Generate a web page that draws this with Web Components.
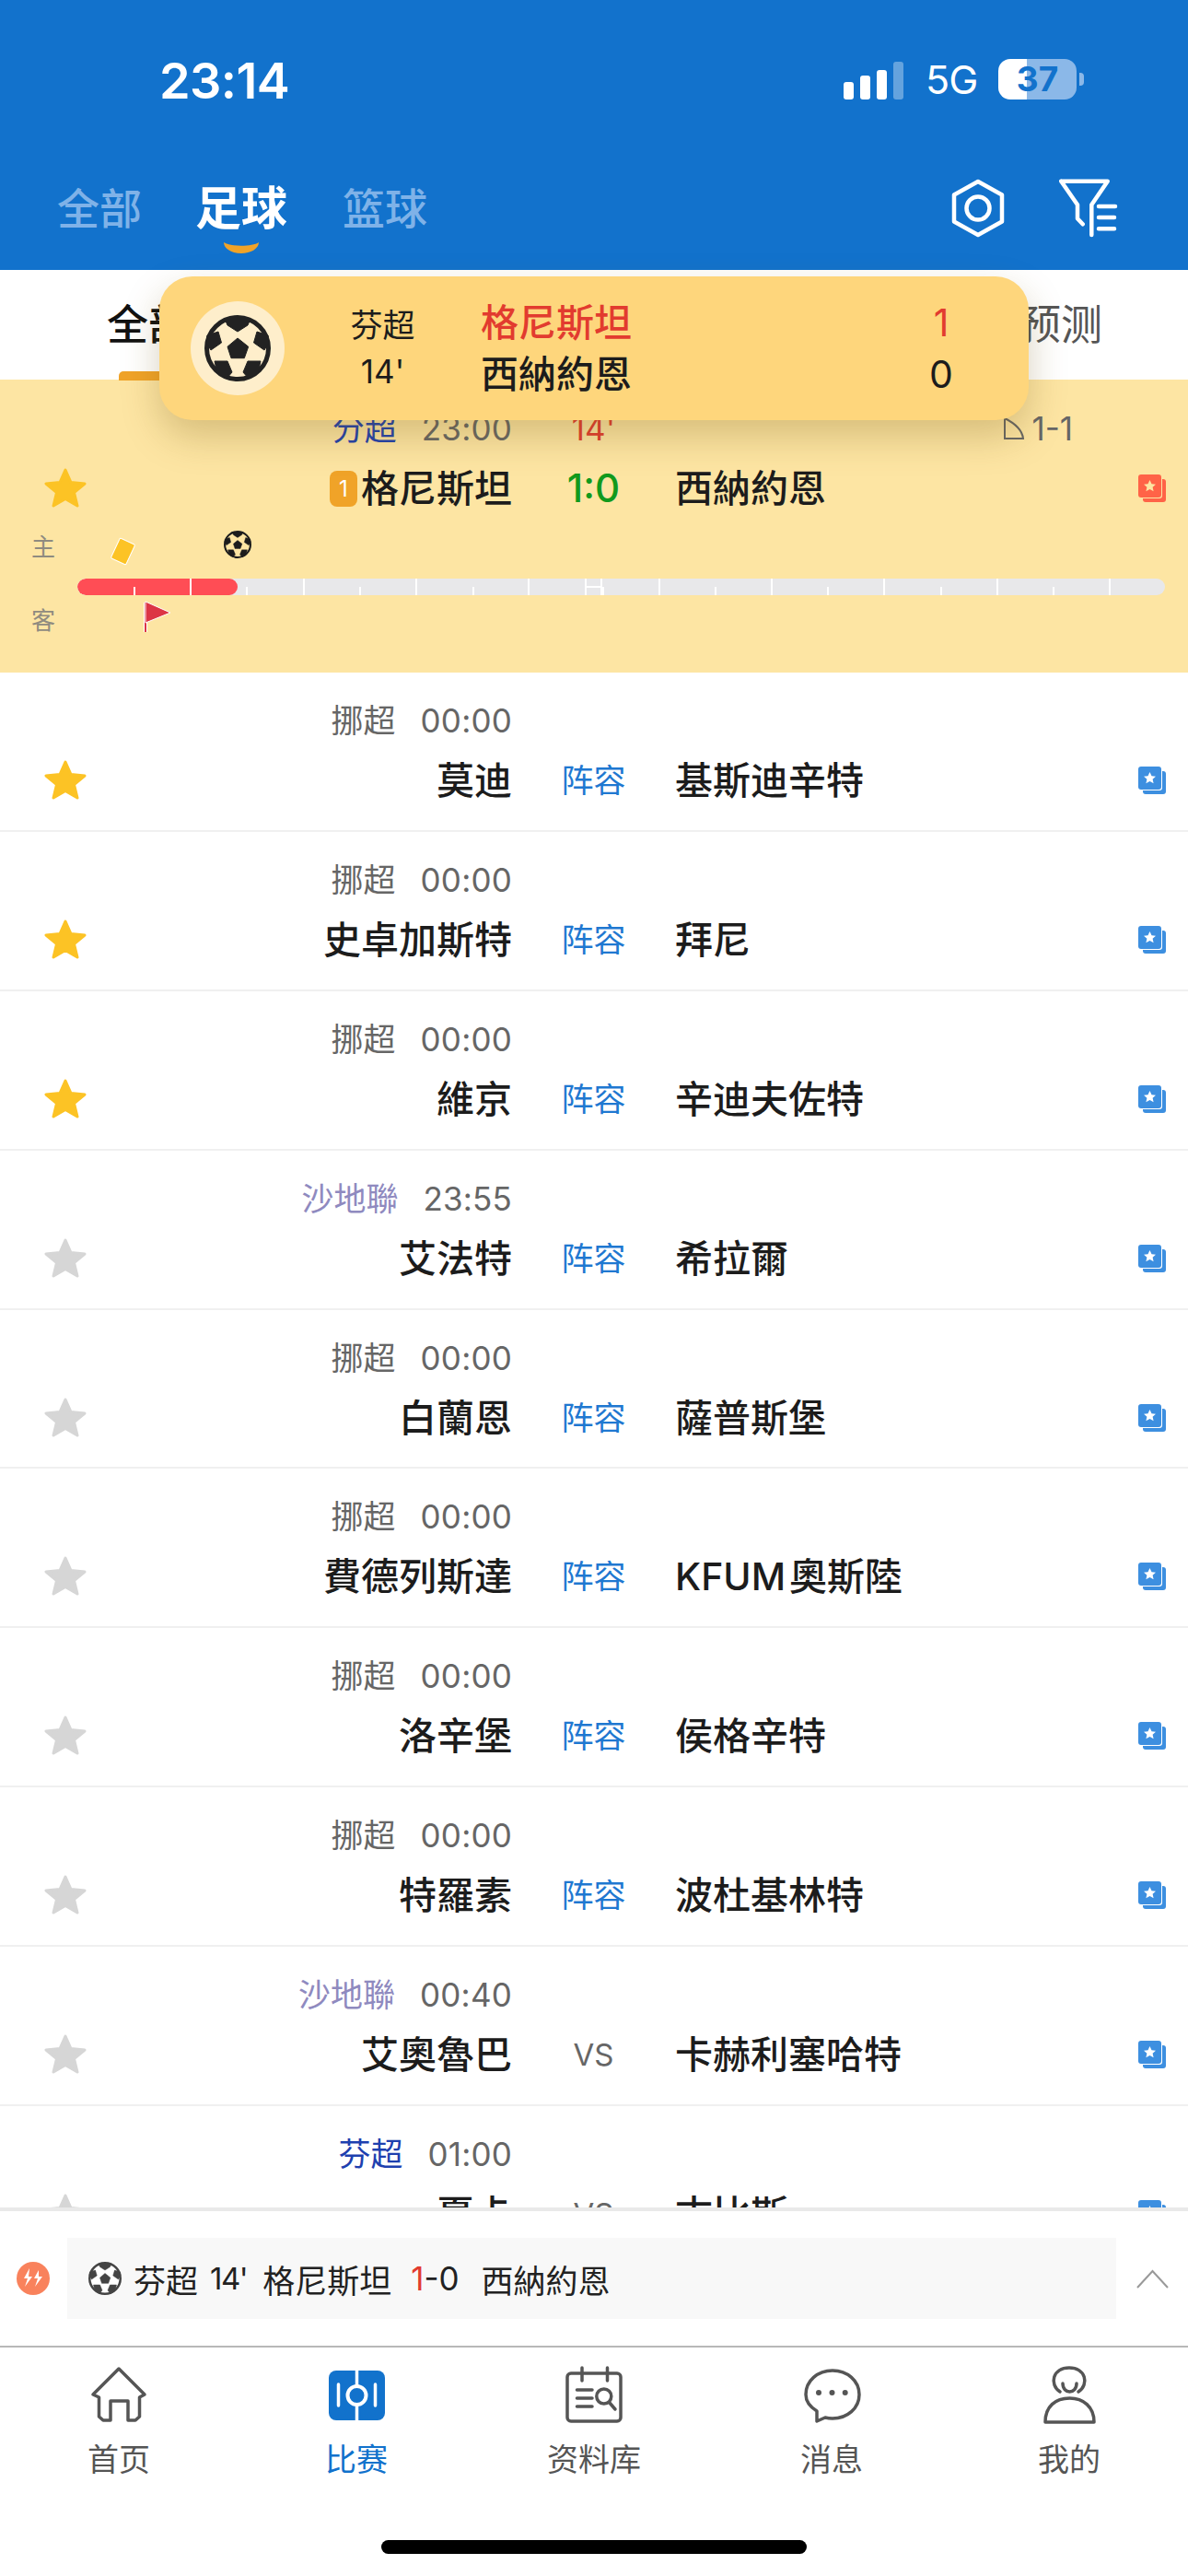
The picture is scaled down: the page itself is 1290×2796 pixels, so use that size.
<!DOCTYPE html>
<html lang="zh">
<head>
<meta charset="utf-8">
<title>比赛</title>
<style>
  html, body { margin: 0; padding: 0; background: #fff; }
  body { font-family: Inter, "Noto Sans CJK SC", sans-serif; width: 1290px; height: 2796px; overflow: hidden; }
</style>
</head>
<body>
<app-screen>
  <app-header></app-header>
  <sub-tabs></sub-tabs>
  <match-list>
    <match-row live starred league="分超" league-color="#1e40af" time="23:00" minute="14'" corner="1-1" badge="1" home="格尼斯坦" mid="1:0" away="西納約恩">
      <match-timeline></match-timeline>
    </match-row>
    <match-row starred league="挪超" time="00:00" home="莫迪" mid="阵容" away="基斯迪辛特"></match-row>
    <match-row starred league="挪超" time="00:00" home="史卓加斯特" mid="阵容" away="拜尼"></match-row>
    <match-row starred league="挪超" time="00:00" home="維京" mid="阵容" away="辛迪夫佐特"></match-row>
    <match-row league="沙地聯" league-color="#8f8abf" time="23:55" home="艾法特" mid="阵容" away="希拉爾"></match-row>
    <match-row league="挪超" time="00:00" home="白蘭恩" mid="阵容" away="薩普斯堡"></match-row>
    <match-row league="挪超" time="00:00" home="費德列斯達" mid="阵容" away="KFUM 奧斯陸"></match-row>
    <match-row league="挪超" time="00:00" home="洛辛堡" mid="阵容" away="侯格辛特"></match-row>
    <match-row league="挪超" time="00:00" home="特羅素" mid="阵容" away="波杜基林特"></match-row>
    <match-row league="沙地聯" league-color="#8f8abf" time="00:40" home="艾奧魯巴" mid="VS" away="卡赫利塞哈特"></match-row>
    <match-row league="芬超" league-color="#1e40af" time="01:00" home="夏卡" mid="VS" away="古比斯"></match-row>
  </match-list>
  <ticker-bar></ticker-bar>
  <tab-bar>
    <tab-item icon="home">首页</tab-item>
    <tab-item icon="match" active>比赛</tab-item>
    <tab-item icon="data">资料库</tab-item>
    <tab-item icon="chat">消息</tab-item>
    <tab-item icon="me">我的</tab-item>
  </tab-bar>
  <goal-toast></goal-toast>
</app-screen>

<script>
// pieza comun: el balon
class SoccerBall extends HTMLElement {
  constructor() {
    super();
    this.attachShadow({ mode: "open" });
  }
  connectedCallback() {
    const size = this.getAttribute("size") || 72;
    const dark = this.getAttribute("dark") || "#222";
    const light = this.getAttribute("light") || "#fff";
    this.shadowRoot.innerHTML = `
    <style>:host { display: block; width: ${size}px; height: ${size}px; line-height: 0; }</style>
    <svg width="${size}" height="${size}" viewBox="0 0 72 72">
      <circle cx="36" cy="36" r="33.5" fill="${light}" stroke="${dark}" stroke-width="5"/>
      <g fill="${dark}" stroke="${dark}" stroke-width="1" stroke-linejoin="round">
        <polygon points="36,25 47.7,34.3 43.3,46.7 29,46.7 25,34.3"/>
        <polygon points="22,4 50,4 47,11 36,18 25,11"/>
        <polygon points="15,18 18.5,30 7,38 2,30 3,22"/>
        <polygon points="57,18 53.5,30 65,38 70,30 69,22"/>
        <polygon points="11,50 25,50 30,62 24,69 14,63"/>
        <polygon points="61,50 47,50 42,62 48,69 58,63"/>
      </g>
    </svg>`;
  }
}
customElements.define("soccer-ball", SoccerBall);

class AppScreen extends HTMLElement {
  constructor() {
    super();
    this.attachShadow({ mode: "open" }).innerHTML = `
    <style>
      :host { display: flex; flex-direction: column; position: relative; width: 1290px; height: 2796px; overflow: hidden; background: #fff; }
    </style>
    <slot></slot>`;
  }
}
customElements.define("app-screen", AppScreen);

class AppHeader extends HTMLElement {
  constructor() {
    super();
    this.attachShadow({ mode: "open" }).innerHTML = `
    <style>
      :host { display: block; height: 293px; background: #1272cc; color: #fff; flex: none; }
      .status { display: flex; justify-content: space-between; align-items: center; height: 44px; padding: 66px 113px 0 173px; }
      .time { font-size: 54px; font-weight: 600; letter-spacing: -.6px; line-height: 44px; }
      .right { display: flex; align-items: center; margin-top: -4px; }
      .bars { display: flex; align-items: flex-end; gap: 7px; height: 41px; margin-top: 2px; }
      .bars i { display: block; width: 11px; background: #fff; border-radius: 3px; }
      .net { font-size: 43px; line-height: 44px; margin-left: 24px; width: 79px; letter-spacing: -1px; }
      .batt { position: relative; width: 85px; height: 44px; border-radius: 13px; overflow: hidden;
        background: linear-gradient(90deg, #fff 0 31px, #8bb8e8 31px); color: #1272cc;
        font-size: 37px; font-weight: 700; line-height: 44px; text-align: center; }
      .nub { width: 5px; height: 14px; margin-left: 3px; background: #8bb8e8; border-radius: 0 4px 4px 0; }
      .nav { display: flex; align-items: center; margin-top: 83px; padding: 0 74px 0 62px; height: 66px; }
      .t { font-size: 46px; line-height: 66px; color: #7fb2e8; font-weight: 500; margin-right: 60px; position: relative; }
      .t:first-child { margin-right: 58px; }
      .t.on { font-size: 50px; color: #fff; font-weight: 700; }
      .smile { position: absolute; left: 30px; top: 69px; }
      .sp { flex: 1; }
      svg { display: block; fill: none; stroke: #fff; stroke-linecap: round; stroke-linejoin: round; }
      svg.smile { stroke: none; fill: #f0a328; }
    </style>
    <div class="status">
      <div class="time">23:14</div>
      <div class="right">
        <div class="bars">
          <i style="height:19px"></i><i style="height:26px"></i><i style="height:32px"></i><i style="height:41px;opacity:.35"></i>
        </div>
        <div class="net">5G</div>
        <div class="batt">37</div>
        <div class="nub"></div>
      </div>
    </div>
    <div class="nav">
      <div class="t">全部</div>
      <div class="t on">足球
        <svg class="smile" width="40" height="13" viewBox="0 0 40 13"><path d="M1 1C8 6 32 6 39 1 39 8 30 13 20 13 10 13 1 8 1 1Z"/></svg>
      </div>
      <div class="t">篮球</div>
      <div class="sp"></div>
      <svg width="64" height="64" viewBox="0 0 64 64" stroke-width="4.5" style="margin-right:56px">
        <path d="M32 3 58 17.5V46.5L32 61 6 46.5V17.5Z"/>
        <circle cx="32" cy="32" r="12.5"/>
      </svg>
      <svg width="66" height="66" viewBox="0 0 66 66" stroke-width="4.5">
        <path d="M2.3 3.7H52.7L35.3 29.3V62M2.3 3.7 20 29.3V44.3L25.7 50.3"/>
        <path d="M43 31H61M43 43H60M43 55.3H60"/>
      </svg>
    </div>`;
  }
}
customElements.define("app-header", AppHeader);

class SubTabs extends HTMLElement {
  constructor() {
    super();
    this.attachShadow({ mode: "open" }).innerHTML = `
    <style>
      :host { display: flex; justify-content: space-between; box-sizing: border-box; height: 119px; padding: 27px 93px 0 116px; flex: none; background: #fff; font-size: 45px; line-height: 66px; color: #555; }
      .on { color: #111; font-weight: 500; position: relative; }
      .on::after { content: ""; position: absolute; left: 13px; right: 13px; top: 83px; height: 10px; border-radius: 5px 5px 0 0; background: #f0a328; }
    </style>
    <div class="on">全部</div>
    <div>预测</div>`;
  }
}
customElements.define("sub-tabs", SubTabs);

class MatchList extends HTMLElement {
  constructor() {
    super();
    this.attachShadow({ mode: "open" }).innerHTML = `
    <style>:host { display: block; flex: 1; min-height: 0; overflow: hidden; }</style>
    <slot></slot>`;
  }
}
customElements.define("match-list", MatchList);

class MatchRow extends HTMLElement {
  constructor() {
    super();
    this.attachShadow({ mode: "open" });
  }
  connectedCallback() {
    const live = this.hasAttribute("live");
    const get = (n) => this.getAttribute(n) || "";
    const mid = get("mid");
    const midClass = live ? "score" : mid === "VS" ? "vs" : "lineup";
    const card = live ? "#ff6347" : "#3d8fe0";
    const gap = live ? "#fde5a3" : "#fff";
    this.shadowRoot.innerHTML = `
    <style>
      :host { display: block; box-sizing: border-box; height: ${live ? "318px" : "172.9px"}; padding-top: ${live ? 31 : 30}px;
        background: ${live ? "#fde5a3" : "#fff"}; ${live ? "" : "border-bottom: 2px solid #f0f0f0;"} }
      .g { display: grid; grid-template-columns: 142px 414px 177px 1fr 30px; padding-right: 24px; align-items: center; }
      .meta { height: 44px; font-size: 35px; line-height: 44px; color: #666; }
      .lt { grid-column: 2; display: flex; justify-content: flex-end; gap: 27px; }
      .league { color: ${get("league-color") || "#666"}; }
      .tm { letter-spacing: .2px; }
      .min { grid-column: 3; text-align: center; color: #e23b2f; }
      .corner { grid-column: 4; display: flex; justify-content: flex-end; align-items: center; gap: 7px; padding-right: 71px; }
      .teams { height: 44px; margin-top: 21px; font-size: 41px; line-height: 44px; color: #1c1c1c; font-weight: 500; }
      .star { grid-column: 1; justify-self: center; display: block; }
      .home { display: flex; justify-content: flex-end; align-items: center; gap: 4px; white-space: nowrap; }
      .badge { width: 30px; height: 39px; border-radius: 8px; background: #f0a328; color: #fff; font-size: 24px; font-weight: 400; line-height: 39px; text-align: center; }
      .mid { text-align: center; font-weight: 400; }
      .lineup { font-size: 35px; color: #1f78d1; }
      .vs { font-size: 33px; color: #666; }
      .score { font-size: 42px; color: #119a1d; font-weight: 500; }
      .away { white-space: nowrap; word-spacing: -7px; }
    </style>
    <div class="g meta">
      <div class="lt"><span class="league">${get("league")}</span><span class="tm">${get("time")}</span></div>
      ${live ? `<div class="min">${get("minute")}</div>
      <div class="corner">
        <svg width="24" height="26" viewBox="0 0 24 26" fill="none" stroke="#666" stroke-width="2"><path d="M2 2V24H22C21 15 12 7 2 2Z"/></svg>
        <span>${get("corner")}</span>
      </div>` : ""}
    </div>
    <div class="g teams">
      <svg class="star" width="46" height="44" viewBox="0 0 46 44" fill="${this.hasAttribute("starred") ? "#fcc325" : "#d6d6d6"}" stroke="${this.hasAttribute("starred") ? "#fcc325" : "#d6d6d6"}" stroke-width="3" stroke-linejoin="round">
        <polygon points="23,2 29,15.5 44,17 32.5,26.5 36,41 23,33.5 10,41 13.5,26.5 2,17 17,15.5"/>
      </svg>
      <div class="home">${get("badge") ? `<span class="badge">${get("badge")}</span>` : ""}<span>${get("home")}</span></div>
      <div class="mid ${midClass}">${mid}</div>
      <div class="away">${get("away")}</div>
      <svg width="30" height="30" viewBox="0 0 30 30">
        <rect x="5" y="5" width="25" height="25" rx="3" fill="${card}"/>
        <rect x="0" y="0" width="26" height="26" rx="3" fill="${gap}"/>
        <rect x="0" y="0" width="25" height="25" rx="3" fill="${card}"/>
        <polygon points="12.5,6 14.5,10.3 19,10.8 15.6,13.8 16.6,18.3 12.5,16 8.4,18.3 9.4,13.8 6,10.8 10.5,10.3" fill="${live ? "#fde5a3" : "#fff"}"/>
      </svg>
    </div>
    <slot></slot>`;
  }
}
customElements.define("match-row", MatchRow);

class MatchTimeline extends HTMLElement {
  constructor() {
    super();
    this.attachShadow({ mode: "open" });
  }
  connectedCallback() {
    // marcas del eje cada 61px, alternando corta y larga
    let ticks = "";
    const xs = [61, 122, 183, 245, 306, 367, 429, 489, 570, 631, 692, 753, 814, 875, 937, 998, 1059, 1120];
    xs.forEach((x, i) => {
      ticks += `<i style="left:${x}px;height:${i % 2 ? 18 : 9}px"></i>`;
    });
    this.shadowRoot.innerHTML = `
    <style>
      :host { display: block; position: relative; margin-top: 25px; height: 118px; font-size: 26px; color: #8f8b80; }
      .lane { position: relative; height: 51px; padding-left: 34px; box-sizing: border-box; }
      .lane.away { height: 49px; }
      .lane span { position: absolute; left: 34px; line-height: 30px; }
      .track { position: relative; margin-left: 84px; width: 1181px; height: 18px; border-radius: 9px; background: #e8e8ea; overflow: hidden; }
      .fill { position: absolute; left: 0; top: 0; bottom: 0; width: 174px; border-radius: 9px; background: #ff4d55; }
      .track i { position: absolute; bottom: 0; width: 1.5px; background: #fff; }
      .ht { position: absolute; left: 551px; top: 0; width: 19px; height: 18px; box-sizing: border-box; border-left: 2px solid #fff; border-right: 2px solid #fff; }
      .ht::after { content: ""; position: absolute; left: 0; right: 0; top: 8px; height: 2px; background: #fff; }
      .yellow { position: absolute; left: 124px; top: 9px; width: 19px; height: 25px; border-radius: 2px; background: #fcc325; border: 1.5px solid #fff; box-sizing: border-box; transform: rotate(25deg); }
      soccer-ball { position: absolute; left: 243px; top: -1px; }
      .flag { position: absolute; left: 154px; top: 6px; }
    </style>
    <div class="lane"><span style="top:2px">主</span><div class="yellow"></div><soccer-ball size="30" dark="#1c1c1c" light="#fde5a3"></soccer-ball></div>
    <div class="track"><div class="fill"></div>${ticks}<div class="ht"></div></div>
    <div class="lane away"><span style="top:13px">客</span>
      <svg class="flag" width="34" height="36" viewBox="0 0 34 36">
        <path d="M4 2V34" stroke="#fff" stroke-width="4"/>
        <path d="M4 2V34" stroke="#dc3545" stroke-width="2"/>
        <polygon points="4,1 31,13 4,24" fill="#dc3545" stroke="#fff" stroke-width="1"/>
      </svg>
    </div>`;
  }
}
customElements.define("match-timeline", MatchTimeline);

class TickerBar extends HTMLElement {
  constructor() {
    super();
    this.attachShadow({ mode: "open" }).innerHTML = `
    <style>
      :host { display: flex; align-items: center; box-sizing: border-box; height: 152px; flex: none; background: #fff;
        border-top: 4px solid #e9e9e9; border-bottom: 2px solid #b8b8b8; padding: 0 22px 0 18px; position: relative; }
      .bolt { display: block; flex: none; }
      .box { flex: none; display: flex; align-items: center; box-sizing: border-box; width: 1139px; height: 88px; margin-left: 19px; padding-left: 23px; background: #f8f8f8; font-size: 35px; color: #222; white-space: nowrap; }
      .box soccer-ball { margin-right: 13px; }
      .mn { margin-left: 13px; font-size: 33px; letter-spacing: -1.5px; }
      .red { color: #e23b2f; }
      .chev { display: block; margin-left: 22px; flex: none; }
    </style>
    <svg class="bolt" width="36" height="36" viewBox="0 0 36 36">
      <circle cx="18" cy="18" r="18" fill="#f9825c"/>
      <path d="M14 7 8 18h4l-3 9 8-11h-4zM24 9l-5 9h4l-3 9 8-11h-4z" fill="#fff"/>
    </svg>
    <div class="box">
      <soccer-ball size="36" dark="#444" light="#fff"></soccer-ball>
      <span>芬超</span><span class="mn">14'</span><span style="margin-left:17px">格尼斯坦</span>
      <span style="margin-left:21px"><span class="red">1</span>-0</span>
      <span style="margin-left:24px">西納約恩</span>
    </div>
    <svg class="chev" width="35" height="21" viewBox="0 0 35 21" fill="none" stroke="#999" stroke-width="2"><path d="M1 20 17.5 2 34 20"/></svg>`;
  }
}
customElements.define("ticker-bar", TickerBar);

class TabBar extends HTMLElement {
  constructor() {
    super();
    this.attachShadow({ mode: "open" }).innerHTML = `
    <style>
      :host { display: grid; grid-template-columns: repeat(5, 1fr); position: relative; box-sizing: border-box; height: 248px; flex: none; background: #fff; padding-top: 20px; align-content: start; }
      .home-ind { position: absolute; left: 414px; top: 209px; width: 462px; height: 15px; border-radius: 8px; background: #000; }
    </style>
    <slot></slot>
    <div class="home-ind"></div>`;
  }
}
customElements.define("tab-bar", TabBar);

const TAB_ICONS = {
  home: `<path d="M32 3 60 31 54.500 34V55L50 59H42V38H23V59H15L10.500 55V34L4 31Z"/>`,
  match: `<rect x="2" y="5" width="61" height="54" rx="8" fill="#1272cc" stroke="none"/>
    <path d="M32.500 5V59M12.500 20V43M52.500 20V43" stroke="#fff" stroke-width="3.500"/>
    <circle cx="32.500" cy="32" r="10" fill="#1272cc" stroke="#fff" stroke-width="4"/>`,
  data: `<rect x="3" y="8" width="58" height="52" rx="4"/><path d="M19 2V16M46.500 2V16M13.500 26H30M13.500 35H30M13.500 44H30M48.500 39.500 55 47"/><circle cx="42.800" cy="33" r="8"/>`,
  chat: `<path d="M33 5C49 5 62 16 62 31S49 57 33 57C30 57 27 56.500 25 56L16 60V49C8 44 4 38 4 31 4 16 17 5 33 5Z"/>
    <circle cx="18" cy="29" r="3" fill="#555" stroke="none"/><circle cx="32.500" cy="29" r="3" fill="#555" stroke="none"/><circle cx="46.700" cy="29" r="3" fill="#555" stroke="none"/>`,
  me: `<path d="M22 28C10 20 14 2 32 2 50 2 54 20 42 28M25 19C25 31 40 31 40 19"/><path d="M6 61C6 44 17 35 32.500 35 47 35 59 44 59 61Z"/>`,
};

class TabItem extends HTMLElement {
  constructor() {
    super();
    this.attachShadow({ mode: "open" });
  }
  connectedCallback() {
    const on = this.hasAttribute("active");
    this.shadowRoot.innerHTML = `
    <style>
      :host { display: flex; flex-direction: column; align-items: center; font-size: 34px; line-height: 46px; color: ${on ? "#1272cc" : "#555"}; }
      svg { display: block; fill: none; stroke: #555; stroke-width: 3.5; stroke-linecap: round; stroke-linejoin: round; margin-bottom: 15px; }
    </style>
    <svg width="64" height="64" viewBox="0 0 64 64">${TAB_ICONS[this.getAttribute("icon")]}</svg>
    <slot></slot>`;
  }
}
customElements.define("tab-item", TabItem);

// aviso de gol, flota encima de la lista
class GoalToast extends HTMLElement {
  constructor() {
    super();
    this.attachShadow({ mode: "open" }).innerHTML = `
    <style>
      :host { position: absolute; left: 173px; top: 300px; width: 944px; height: 156px; box-sizing: border-box; border-radius: 36px; background: #fed67c;
        box-shadow: 0 18px 40px rgba(120, 90, 20, .28); display: grid; grid-template-columns: 102px 213px 1fr 40px; align-items: center; padding: 0 75px 0 34px; color: #1c1c1c; }
      .disc { width: 102px; height: 102px; border-radius: 50%; background: #feeecb; display: flex; align-items: center; justify-content: center; }
      .lg { text-align: center; font-size: 35px; line-height: 50px; }
      .col { font-size: 41px; line-height: 56px; font-weight: 500; }
      .sc { text-align: center; font-size: 41px; line-height: 56px; }
      .red { color: #e23b2f; }
    </style>
    <div class="disc"><soccer-ball size="72" dark="#222" light="#feeecb"></soccer-ball></div>
    <div class="lg"><div>芬超</div><div>14'</div></div>
    <div class="col"><div class="red">格尼斯坦</div><div>西納約恩</div></div>
    <div class="sc"><div class="red">1</div><div>0</div></div>`;
  }
}
customElements.define("goal-toast", GoalToast);
</script>
</body>
</html>
